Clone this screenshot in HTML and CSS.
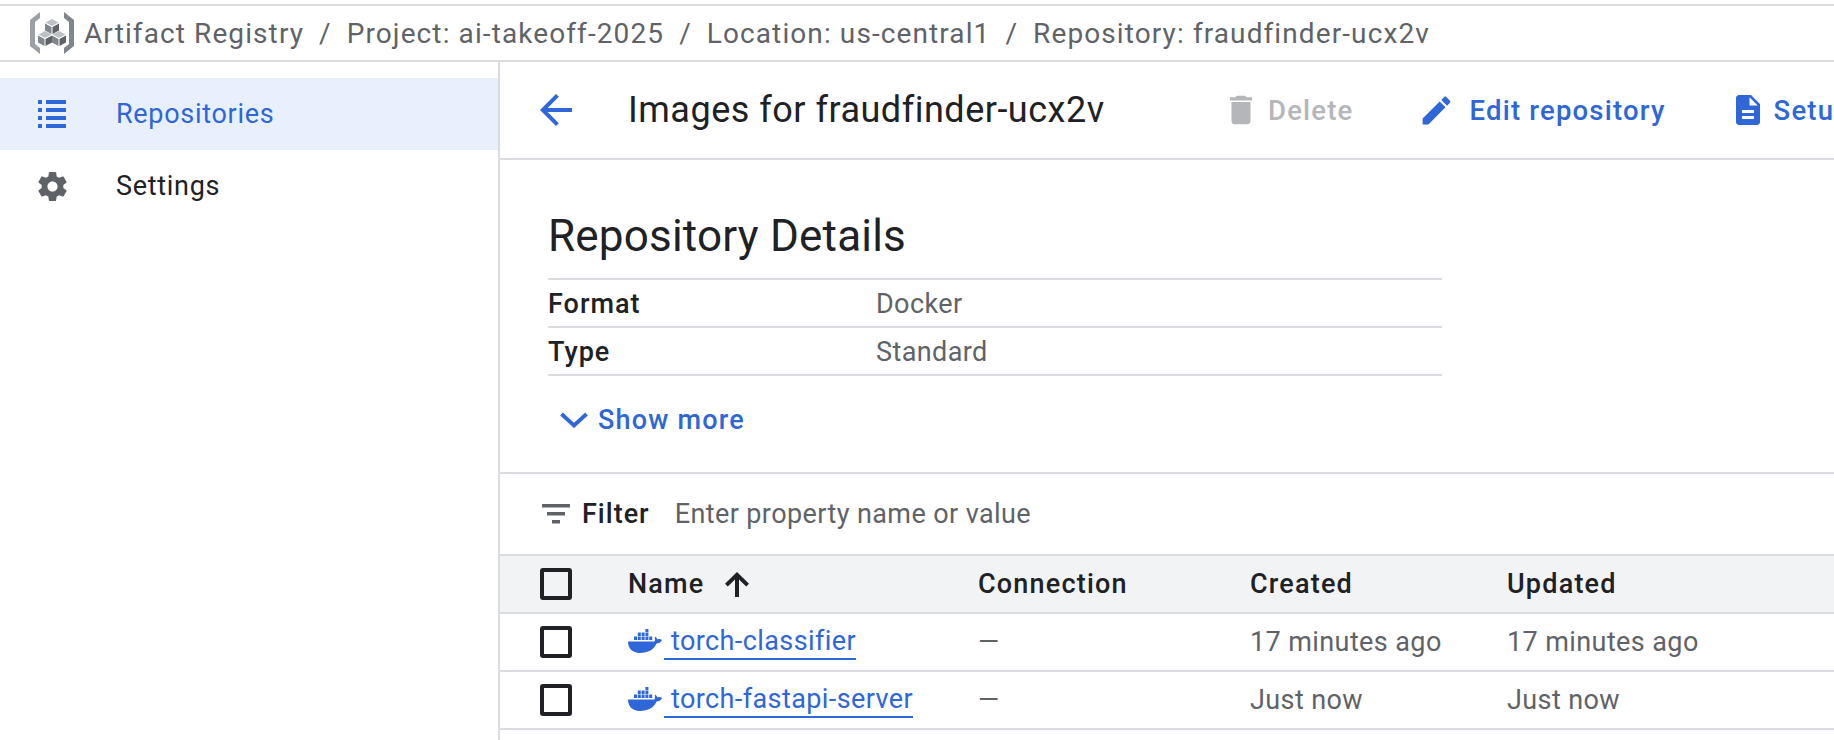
FILE: index.html
```html
<!DOCTYPE html>
<html lang="en">
<head>
    <meta charset="UTF-8">
    <title>Artifact Registry</title>
    <link rel="stylesheet" href="styles.css">
</head>
<body>

    <nav class="crumbs">
        <svg class="logo" viewBox="0 0 50 42" width="50" height="42">
            <path fill="#9aa0a6" d="M13 0 3 8V34L13 42V36L8 32V10L13 6Z"/>
            <path fill="#80868b" d="M37 0 47 8V34L37 42V36L42 32V10L37 6Z"/>
            <g id="cube">
                <path fill="#bdc1c6" d="M25 7 31.500 10.500 25 14 18.500 10.500Z"/>
                <path fill="#80868b" d="M18 11.500 24.500 15V22L18 18.500Z"/>
                <path fill="#5f6368" d="M32 11.500 25.500 15V22L32 18.500Z"/>
            </g>
            <use href="#cube" x="-7" y="12"/>
            <use href="#cube" x="7" y="12"/>
        </svg>
        <span>Artifact Registry</span>
        <span class="sep">/</span>
        <span>Project: ai-takeoff-2025</span>
        <span class="sep">/</span>
        <span>Location: us-central1</span>
        <span class="sep">/</span>
        <span>Repository: fraudfinder-ucx2v</span>
    </nav>

    <div class="layout">
        <aside class="sidebar">
            <a class="side-item active">
                <svg class="side-icon" viewBox="0 0 28 28" width="28" height="28" fill="currentColor">
                    <rect x="0" y="0" width="4" height="4"/><rect x="8" y="0" width="20" height="4"/>
                    <rect x="0" y="8" width="4" height="4"/><rect x="8" y="8" width="20" height="4"/>
                    <rect x="0" y="16" width="4" height="4"/><rect x="8" y="16" width="20" height="4"/>
                    <rect x="0" y="24" width="4" height="4"/><rect x="8" y="24" width="20" height="4"/>
                </svg>
                <span>Repositories</span>
            </a>
            <a class="side-item">
                <svg class="side-icon gear" viewBox="2 2 20 20" width="29" height="29" fill="currentColor">
                    <path d="M19.430 12.980c.040-.320.070-.640.070-.980s-.030-.660-.070-.980l2.110-1.650c.190-.150.240-.420.120-.640l-2-3.460c-.120-.220-.390-.300-.610-.220l-2.490 1c-.520-.400-1.080-.730-1.690-.980l-.380-2.650C14.460 2.180 14.250 2 14 2h-4c-.250 0-.460.180-.490.420l-.380 2.650c-.610.250-1.170.590-1.690.980l-2.490-1c-.230-.090-.490 0-.610.220l-2 3.460c-.130.220-.070.490.120.640l2.110 1.650c-.040.320-.070.650-.070.980s.030.660.070.980l-2.110 1.650c-.190.150-.240.420-.120.640l2 3.460c.120.220.390.300.610.220l2.490-1c.520.400 1.080.730 1.690.980l.380 2.650c.030.240.240.420.490.420h4c.250 0 .460-.180.490-.420l.380-2.650c.610-.250 1.170-.590 1.690-.980l2.490 1c.230.090.490 0 .610-.220l2-3.460c.120-.220.070-.490-.120-.640l-2.110-1.650zM12 15.500c-1.930 0-3.500-1.570-3.500-3.500s1.570-3.500 3.500-3.500 3.500 1.570 3.500 3.500-1.570 3.500-3.500 3.500z"/>
                </svg>
                <span>Settings</span>
            </a>
        </aside>

        <main class="content">
            <header class="toolbar">
                <svg class="back" viewBox="0 0 24 24" width="48" height="48" fill="#2f66d8">
                    <path d="M20 11H7.830l5.590-5.590L12 4l-8 8 8 8 1.410-1.410L7.830 13H20v-2z"/>
                </svg>
                <h1 class="title">Images for fraudfinder-ucx2v</h1>
                <div class="actions">
                    <a class="action disabled">
                        <svg viewBox="0 0 24 24" width="38" height="38" fill="currentColor">
                            <path d="M6 19c0 1.100.900 2 2 2h8c1.100 0 2-.900 2-2V7H6v12zM19 4h-3.500l-1-1h-5l-1 1H5v2h14V4z"/>
                        </svg>
                        Delete
                    </a>
                    <a class="action edit">
                        <svg viewBox="0 0 24 24" width="37" height="37" fill="currentColor">
                            <path d="M3 17.250V21h3.750L17.810 9.940l-3.750-3.750L3 17.250zM20.710 7.040c.390-.390.390-1.020 0-1.410l-2.340-2.340c-.390-.390-1.020-.390-1.410 0l-1.830 1.830 3.750 3.750 1.830-1.830z"/>
                        </svg>
                        Edit repository
                    </a>
                    <a class="action">
                        <svg viewBox="0 0 24 24" width="36" height="36" fill="currentColor">
                            <path d="M14 2H6c-1.100 0-2 .900-2 2v16c0 1.100.900 2 2 2h12c1.100 0 2-.900 2-2V8l-6-6zm2 16H8v-2h8v2zm0-4H8v-2h8v2zm-3-5V3.500L18.500 9H13z"/>
                        </svg>
                        Setup instructions
                    </a>
                </div>
            </header>

            <section class="details">
                <h2>Repository Details</h2>
                <div class="detail-row"><b>Format</b><span>Docker</span></div>
                <div class="detail-row"><b>Type</b><span>Standard</span></div>
                <a class="show-more">
                    <svg viewBox="0 0 28 16" width="28" height="16" fill="none" stroke="currentColor" stroke-width="3.800">
                        <path d="M1.500 2 14 13.500 26.500 2"/>
                    </svg>
                    Show more
                </a>
            </section>

            <div class="filter">
                <svg viewBox="0 0 28 20" width="28" height="20" fill="#5f6368">
                    <rect x="0" y="0" width="28" height="3.500"/>
                    <rect x="5" y="8" width="18" height="3.500"/>
                    <rect x="10" y="16" width="8" height="3.500"/>
                </svg>
                <b>Filter</b>
                <span>Enter property name or value</span>
            </div>

            <div class="row head">
                <i class="check"></i>
                <div class="name-cell">Name
                    <svg viewBox="0 0 24 25" width="24" height="25" fill="#202124">
                        <path d="M10 25V7.500L2.800 14.600 0 11.800 12 0 24 11.800 21.200 14.600 14 7.500V25Z"/>
                    </svg>
                </div>
                <div>Connection</div>
                <div>Created</div>
                <div>Updated</div>
            </div>
            <div class="row">
                <i class="check"></i>
                <div class="name-cell">
                    <a class="image-link">
                        <svg class="docker" viewBox="0 0 34 24" width="34" height="24" fill="#2f66d8">
                            <use href="#whale"/>
                        </svg>
                        <span>torch-classifier</span>
                    </a>
                </div>
                <div class="muted">—</div>
                <div class="muted">17 minutes ago</div>
                <div class="muted">17 minutes ago</div>
            </div>
            <div class="row">
                <i class="check"></i>
                <div class="name-cell">
                    <a class="image-link">
                        <svg class="docker" viewBox="0 0 34 24" width="34" height="24" fill="#2f66d8">
                            <use href="#whale"/>
                        </svg>
                        <span>torch-fastapi-server</span>
                    </a>
                </div>
                <div class="muted">—</div>
                <div class="muted">Just now</div>
                <div class="muted">Just now</div>
            </div>
        </main>
    </div>

    <svg class="defs" width="0" height="0">
        <symbol id="whale" viewBox="0 0 34 24">
            <path d="M0 12.500H26.500C27.500 10.500 26.500 8 27 7.500 28.500 8.500 29 9.500 29.500 10.500 31 9.800 32.500 10 34 11 33 13.500 30.500 14.500 28.500 14.500 26 20.500 20 24 12 24 4 24 0 19 0 12.500Z"/>
            <rect x="6" y="7.500" width="3" height="3.500"/><rect x="9.800" y="7.500" width="3" height="3.500"/><rect x="13.600" y="7.500" width="3" height="3.500"/><rect x="17.400" y="7.500" width="3" height="3.500"/><rect x="21.200" y="7.500" width="3" height="3.500"/>
            <rect x="9.800" y="3.500" width="3" height="3.500"/><rect x="13.600" y="3.500" width="3" height="3.500"/><rect x="17.400" y="3.500" width="3" height="3.500"/>
            <rect x="17.400" y="0" width="3" height="3"/>
        </symbol>
    </svg>

</body>
</html>
```

FILE: styles.css
```css
* {
    box-sizing: border-box;
}
html, body {
    height: 100%;
}
body {
    margin: 0;
    padding-top: 4px;
    overflow: hidden;
    background: white;
    color: #202124;
    font-family: Roboto, Arial, sans-serif;
    font-size: 27px;
    letter-spacing: 0.4px;
}
.defs {
    display: none;
}

.crumbs {
    display: flex;
    align-items: center;
    height: 58px;
    padding-left: 27px;
    border-top: 2px solid #dadce0;
    border-bottom: 2px solid #dadce0;
    color: #5f6368;
    font-size: 28px;
    letter-spacing: 1.1px;
}
.logo {
    margin-right: 7px;
}
.sep {
    margin: 0 15px;
}

.layout {
    display: flex;
    height: 678px;
}
.sidebar {
    flex: 0 0 500px;
    padding-top: 16px;
    border-right: 2px solid #dadce0;
}
.side-item {
    display: flex;
    align-items: center;
    height: 72px;
    padding-left: 38px;
    letter-spacing: 0.7px;
}
.side-item.active {
    background: #e8f0fe;
    color: #2f66d8;
}
.side-icon {
    margin-right: 50px;
}
.gear {
    margin-right: 49px;
    color: #5f6368;
}

.content {
    flex: 1;
    min-width: 0;
    overflow: hidden;
}
.toolbar {
    display: flex;
    align-items: center;
    height: 98px;
    padding-left: 32px;
    border-bottom: 2px solid #dadce0;
    white-space: nowrap;
}
.back {
    flex: none;
}
.title {
    flex: none;
    width: 594px;
    margin: 0 0 0 48px;
    font-size: 36px;
    font-weight: 400;
    letter-spacing: 0.5px;
}
.actions {
    display: flex;
    flex: none;
    gap: 64px;
}
.action {
    display: flex;
    align-items: center;
    gap: 8px;
    color: #2f66d8;
    font-size: 27.5px;
    font-weight: 500;
    letter-spacing: 1.2px;
}
.action svg {
    flex: none;
}
.action.edit {
    gap: 15px;
}
.action.disabled {
    color: #b4b6b9;
}

.details {
    height: 314px;
    padding: 52px 0 0 48px;
    border-bottom: 2px solid #dadce0;
}
.details h2 {
    margin: 0 0 18px;
    font-size: 44px;
    font-weight: 400;
    letter-spacing: 0.2px;
    line-height: 48px;
}
.detail-row {
    display: flex;
    align-items: center;
    width: 894px;
    height: 48px;
    padding-top: 2px;
    border-top: 2px solid #dadce0;
}
.detail-row:last-of-type {
    height: 50px;
    border-bottom: 2px solid #dadce0;
}
.detail-row b {
    width: 328px;
    font-weight: 500;
    letter-spacing: 1px;
}
.detail-row span {
    color: #5f6368;
}
.show-more {
    display: flex;
    align-items: center;
    gap: 10px;
    margin: 28px 0 0 12px;
    color: #2f66d8;
    font-weight: 500;
    letter-spacing: 1.2px;
}

.filter {
    display: flex;
    align-items: center;
    height: 80px;
    padding-left: 42px;
}
.filter b {
    margin: 0 25px 0 12px;
    font-weight: 500;
    letter-spacing: 1px;
}
.filter span {
    color: #5f6368;
}

.row {
    display: grid;
    grid-template-columns: 128px 350px 272px 257px 1fr;
    align-items: center;
    height: 58px;
    border-bottom: 2px solid #dadce0;
}
.row.head {
    height: 60px;
    border-top: 2px solid #dadce0;
    background: #f1f3f4;
    font-weight: 500;
    letter-spacing: 1.2px;
}
.check {
    width: 32px;
    height: 32px;
    margin-left: 40px;
    border: 4px solid #202124;
    border-radius: 3px;
}
.name-cell {
    display: flex;
    align-items: center;
    gap: 20px;
}
.image-link {
    display: flex;
    align-items: flex-start;
    color: #2f66d8;
}
.image-link span {
    padding: 1px 0 0 7px;
    margin-left: 2px;
    line-height: 33px;
    border-bottom: 2px solid #2f66d8;
}
.docker {
    flex: none;
    margin-top: 5px;
}
.muted {
    color: #5f6368;
}
```
